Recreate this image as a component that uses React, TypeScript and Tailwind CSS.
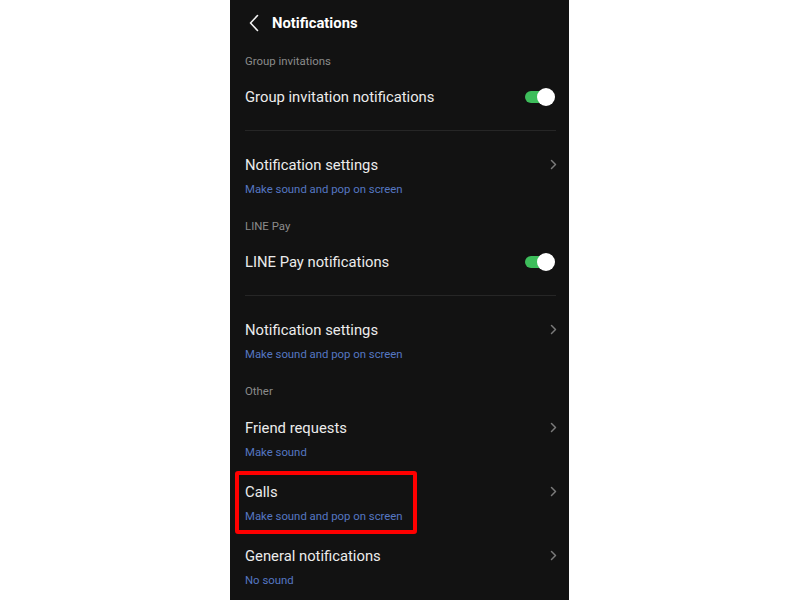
import { ReactNode } from "react";

function Chevron() {
  return (
    <svg width="7" height="11" viewBox="0 0 7 11" className="shrink-0 mr-[-1px]">
      <path d="M1.5 1.5 L5.5 5.5 L1.5 9.5" fill="none" stroke="#7a7a7a" strokeWidth="1.5" strokeLinecap="round" strokeLinejoin="round" />
    </svg>
  );
}

function Toggle() {
  return (
    <div className="relative w-[30px] h-[18px] shrink-0">
      <div className="absolute left-0 top-[3px] w-[23px] h-[12px] rounded-full bg-[#3dbd5b]" />
      <div className="absolute right-0 top-0 w-[18px] h-[18px] rounded-full bg-white" />
    </div>
  );
}

function SectionLabel({ children, tall }: { children: ReactNode; tall?: boolean }) {
  return (
    <div className={`${tall ? "h-[36px]" : "h-[34px] pt-[2px]"} flex items-center text-[11.4px] text-[#8b8b8b]`}>
      {children}
    </div>
  );
}

function ToggleRow({ title }: { title: string }) {
  return (
    <div className="h-[34px] flex items-center justify-between pr-[1px]">
      <span className="text-[14.8px] text-[#ececec]">{title}</span>
      <Toggle />
    </div>
  );
}

function Item({ title, sub, highlight }: { title: string; sub: string; highlight?: boolean }) {
  return (
    <div className="relative h-[64px] flex items-start justify-between">
      <div className="flex flex-col pt-[10px]">
        <span className="text-[14.8px] leading-[20px] text-[#ececec]">{title}</span>
        <span className="mt-[6px] text-[11.35px] leading-[16px] text-[#5577c2]">{sub}</span>
      </div>
      <div className="mt-[14px]">
        <Chevron />
      </div>
      {highlight && (
        <div className="absolute left-[-10px] top-[-1px] w-[182px] h-[63px] border-[4px] border-[#ff0000] rounded-[3px]" />
      )}
    </div>
  );
}

function Divider() {
  return <div className="mt-[16px] mb-[14px] h-px bg-[#262626]" />;
}

export default function App() {
  return (
    <div className="w-[800px] h-[600px] bg-white flex justify-center overflow-hidden font-['Roboto',sans-serif]">
      <div className="ml-[-1px] w-[339px] h-full bg-[#121212] flex flex-col">
        <div className="h-[47px] flex items-center pl-[19px] gap-[13px] pt-[2px]">
          <svg width="10" height="18" viewBox="0 0 10 18">
            <path d="M8.5 1.5 L1.5 9 L8.5 16.5" fill="none" stroke="#f2f2f2" strokeWidth="1.6" strokeLinecap="round" strokeLinejoin="round" />
          </svg>
          <span className="text-[14.8px] font-bold text-white">Notifications</span>
        </div>
        <div className="pl-[15px] pr-[13px] flex flex-col">
          <SectionLabel tall>Group invitations</SectionLabel>
          <ToggleRow title="Group invitation notifications" />
          <Divider />
          <Item title="Notification settings" sub="Make sound and pop on screen" />
          <SectionLabel tall>LINE Pay</SectionLabel>
          <ToggleRow title="LINE Pay notifications" />
          <Divider />
          <Item title="Notification settings" sub="Make sound and pop on screen" />
          <SectionLabel>Other</SectionLabel>
          <Item title="Friend requests" sub="Make sound" />
          <Item title="Calls" sub="Make sound and pop on screen" highlight />
          <Item title="General notifications" sub="No sound" />
        </div>
      </div>
    </div>
  );
}
